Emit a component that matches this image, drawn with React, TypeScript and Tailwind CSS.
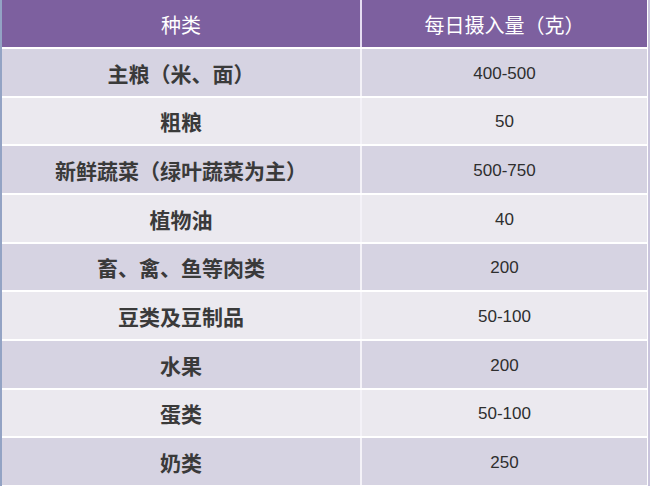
const rows: [string, string][] = [
  ["主粮（米、面）", "400-500"],
  ["粗粮", "50"],
  ["新鲜蔬菜（绿叶蔬菜为主）", "500-750"],
  ["植物油", "40"],
  ["畜、禽、鱼等肉类", "200"],
  ["豆类及豆制品", "50-100"],
  ["水果", "200"],
  ["蛋类", "50-100"],
  ["奶类", "250"],
];

const cjk = "font-['Microsoft_YaHei','Noto_Sans_CJK_SC',sans-serif]";
const num = "font-['Liberation_Sans',Arial,sans-serif]";

export default function App() {
  return (
    <div className="flex h-[486px] w-[650px] border-l-2 border-l-[#93a3c4] border-r-2 border-r-[#c9c4dc] bg-white pb-[1px]">
      <div className="flex flex-1 flex-col gap-[2px] border-r border-white">
        {/* Header */}
        <div className="grid h-[47px] grid-cols-[358px_1fr] gap-[2px] bg-[#e6ddf2]">
          <div className={`flex items-center justify-center pt-[2px] bg-[#7d609f] text-[20px] text-white ${cjk}`}>
            种类
          </div>
          <div className={`flex items-center justify-center pt-[2px] bg-[#7d609f] text-[20px] text-white ${cjk}`}>
            每日摄入量（克）
          </div>
        </div>

        {/* Rows */}
        {rows.map(([name, amount], i) => (
          <div
            key={name}
            className="grid flex-1 grid-cols-[358px_1fr] gap-[2px] bg-[#f4f2f8]"
          >
            <div
              className={`flex items-center justify-center pt-[2px] text-[21px] font-bold text-[#3a3a3a] ${cjk} ${
                i % 2 === 0 ? "bg-[#d6d3e2]" : "bg-[#ebe9ef]"
              }`}
            >
              {name}
            </div>
            <div
              className={`flex items-center justify-center pt-[2px] text-[17px] text-[#2e2e2e] ${num} ${
                i % 2 === 0 ? "bg-[#d6d3e2]" : "bg-[#ebe9ef]"
              }`}
            >
              {amount}
            </div>
          </div>
        ))}
      </div>
    </div>
  );
}
